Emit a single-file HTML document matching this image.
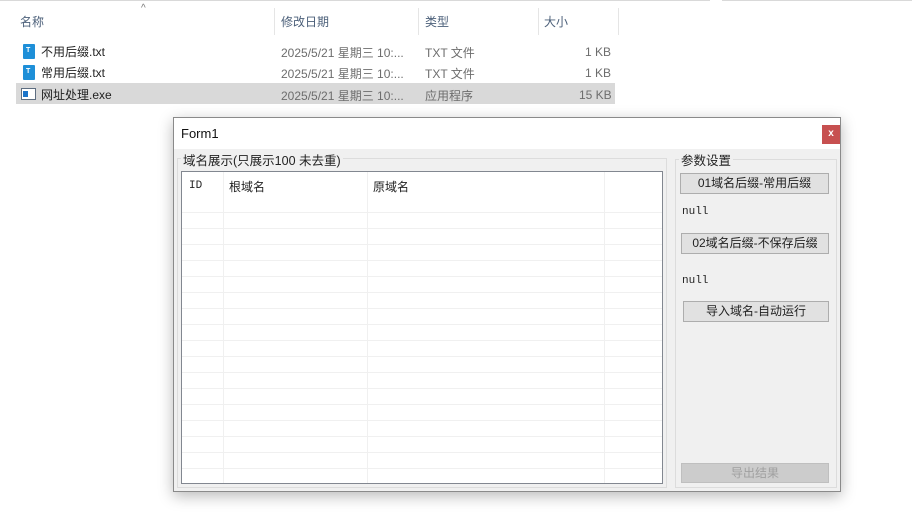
<!DOCTYPE html>
<html><head><meta charset="utf-8"><style>
*{margin:0;padding:0;box-sizing:border-box}
body{width:912px;height:526px;background:#fff;position:relative;overflow:hidden;font-family:"Liberation Sans","Noto Sans CJK SC",sans-serif;font-size:12px;color:#222}
.a{position:absolute;white-space:nowrap}
.hd{color:#4c607a;font-size:12px}
.g{color:#6d6d6d}
.sep{position:absolute;top:8px;width:1px;height:27px;background:#e5e5e5}
.ic{position:absolute;width:12px;height:15px;background:#1e8fd8;border-radius:1px}
.ic:after{content:"T";position:absolute;left:3px;top:3px;color:#fff;font-size:7px;font-weight:bold}
.form{position:absolute;left:173px;top:117px;width:668px;height:375px;background:#f0f0f0;border:1px solid #8a8a8a;box-shadow:0 4px 14px rgba(0,0,0,.28)}
.mono{font-family:"Liberation Mono","Noto Sans CJK SC",monospace}
.btn{position:absolute;background:#e1e1e1;border:1px solid #adadad;text-align:center;font-size:12px;line-height:19px}
.grp{position:absolute;border:1px solid #dcdcdc}
</style></head><body>
<div class="a" style="left:0;top:0;width:710px;height:1px;background:#d9d9d9"></div>
<div class="a" style="left:722px;top:0;width:190px;height:1px;background:#d9d9d9"></div>
<div class="a" style="left:141px;top:3px;color:#777;font-size:10px">^</div>
<div class="a hd" style="left:20px;top:13px">名称</div>
<div class="sep" style="left:274px"></div>
<div class="a hd" style="left:281px;top:13px">修改日期</div>
<div class="sep" style="left:418px"></div>
<div class="a hd" style="left:425px;top:13px">类型</div>
<div class="sep" style="left:538px"></div>
<div class="a hd" style="left:544px;top:13px">大小</div>
<div class="sep" style="left:618px"></div>

<div class="ic" style="left:23px;top:44px"></div>
<div class="a" style="left:41px;top:43px">不用后缀.txt</div>
<div class="a g" style="left:281px;top:44px">2025/5/21 星期三 10:...</div>
<div class="a g" style="left:425px;top:44px">TXT 文件</div>
<div class="a g" style="left:585px;top:45px">1 KB</div>
<div class="ic" style="left:23px;top:65px"></div>
<div class="a" style="left:41px;top:64px">常用后缀.txt</div>
<div class="a g" style="left:281px;top:65px">2025/5/21 星期三 10:...</div>
<div class="a g" style="left:425px;top:65px">TXT 文件</div>
<div class="a g" style="left:585px;top:66px">1 KB</div>
<div class="a" style="left:16px;top:83px;width:599px;height:21px;background:#d9d9d9"></div>
<div class="a" style="left:21px;top:88px;width:15px;height:12px;border:1px solid #5d6d80;background:#fff"><div style="position:absolute;left:1px;top:2px;width:5px;height:6px;background:#1a73c8"></div></div>
<div class="a" style="left:41px;top:86px">网址处理.exe</div>
<div class="a g" style="left:281px;top:87px">2025/5/21 星期三 10:...</div>
<div class="a g" style="left:425px;top:87px">应用程序</div>
<div class="a g" style="left:579px;top:88px">15 KB</div>

<div class="form">
 <div class="a" style="left:0;top:0;width:666px;height:31px;background:#fff"></div>
 <div class="a" style="left:7px;top:8px;font-size:13px;color:#111">Form1</div>
 <div class="a" style="left:648px;top:7px;width:18px;height:19px;background:#c75050;color:#fff;font-size:10px;text-align:center;line-height:18px;font-weight:bold">x</div>

 <div class="grp" style="left:3px;top:40px;width:490px;height:330px"></div>
 <div class="a" style="left:7px;top:32px;background:#f0f0f0;padding:0 2px;font-size:12.5px">域名展示(只展示100 未去重)</div>
 <div class="a" style="left:7px;top:53px;width:482px;height:313px;background:#fff;border:1px solid #828790;overflow:hidden">
  <div class="a" style="left:0;top:40px;width:480px;height:272px;background:repeating-linear-gradient(to bottom,#f0f0f0 0,#f0f0f0 1px,transparent 1px,transparent 16px)"></div>
  <div class="a" style="left:41px;top:0;width:1px;height:311px;background:#f0f0f0"></div>
  <div class="a" style="left:185px;top:0;width:1px;height:311px;background:#f0f0f0"></div>
  <div class="a" style="left:422px;top:0;width:1px;height:311px;background:#f0f0f0"></div>
  <div class="a mono" style="left:7px;top:8px;font-size:11px">ID</div>
  <div class="a" style="left:47px;top:6px">根域名</div>
  <div class="a" style="left:191px;top:6px">原域名</div>
 </div>

 <div class="grp" style="left:501px;top:41px;width:162px;height:329px"></div>
 <div class="a" style="left:505px;top:32px;background:#f0f0f0;padding:0 2px;font-size:12.5px">参数设置</div>
 <div class="btn" style="left:506px;top:55px;width:149px;height:21px">01域名后缀-常用后缀</div>
 <div class="a mono" style="left:508px;top:88px;font-size:11px">null</div>
 <div class="btn" style="left:507px;top:115px;width:148px;height:21px">02域名后缀-不保存后缀</div>
 <div class="a mono" style="left:508px;top:157px;font-size:11px">null</div>
 <div class="btn" style="left:509px;top:183px;width:146px;height:21px">导入域名-自动运行</div>
 <div class="btn" style="left:507px;top:345px;width:148px;height:20px;background:#cccccc;border-color:#bfbfbf;color:#a0a0a0">导出结果</div>
</div>
</body></html>
